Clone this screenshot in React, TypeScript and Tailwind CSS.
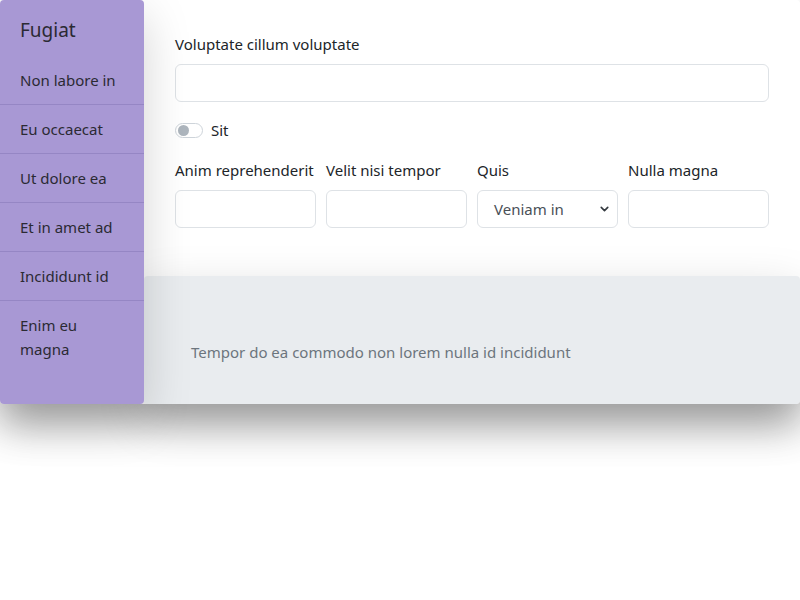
import { ChevronDown } from 'lucide-react';

const navItems = ['Non labore in', 'Eu occaecat', 'Ut dolore ea', 'Et in amet ad', 'Incididunt id', 'Enim eu magna'];

function Field({ label }: { label: string }) {
  return (
    <div className="flex flex-col">
      <label className="mb-2 leading-6">{label}</label>
      <input className="h-[38px] w-full rounded-[6px] border border-[#dee2e6] bg-white px-3 outline-none" />
    </div>
  );
}

export default function App() {
  return (
    <div className="min-h-[600px] w-[800px] bg-white">
      <div
        className="flex w-[800px] rounded bg-white text-[15px] text-[#212529] shadow-[0_20px_40px_rgba(0,0,0,0.3)]"
        style={{ fontFamily: '"Noto Sans", "Open Sans", sans-serif' }}
      >
        {/* Sidebar */}
        <aside className="relative z-10 flex w-[144px] shrink-0 flex-col rounded bg-[#a898d4] text-[#2b2a33] shadow-[0_1rem_3rem_rgba(0,0,0,0.175)]">
          <div className="px-5 pt-[15px] pb-[11px] text-[19px] leading-[30px]">Fugiat</div>
          {navItems.map((item, i) => (
            <div
              key={item}
              className={
                'px-5 py-3 text-[15px] leading-6 ' +
                (i < navItems.length - 1 ? 'border-b border-[#9586c4]' : '')
              }
            >
              {item}
            </div>
          ))}
        </aside>

        {/* Main */}
        <div className="flex min-w-0 flex-1 flex-col">
          <div className="px-[31px] pt-8 pb-12">
            <Field label="Voluptate cillum voluptate" />

            <div className="mt-4 flex items-center gap-2">
              <div className="flex h-[15px] w-[28px] items-center rounded-full border border-[#ced4da] bg-white px-[2px]">
                <div className="h-[11px] w-[11px] rounded-full bg-[#adb5bd]" />
              </div>
              <span className="leading-6">Sit</span>
            </div>

            <div className="mt-4 grid grid-cols-4 gap-[10px]">
              <Field label="Anim reprehenderit" />
              <Field label="Velit nisi tempor" />
              <div className="flex flex-col">
                <label className="mb-2 leading-6">Quis</label>
                <div className="relative h-[38px] rounded-[6px] border border-[#dee2e6] bg-white">
                  <span className="absolute top-1/2 left-4 -translate-y-1/2 text-[#495057]">Veniam in</span>
                  <ChevronDown className="absolute top-1/2 right-[6px] -translate-y-1/2 text-[#343a40]" size={13} strokeWidth={3} />
                </div>
              </div>
              <Field label="Nulla magna" />
            </div>
          </div>

          <div className="h-[128px] rounded bg-[#e9ecef] pt-16 pl-[47px] text-[#6c757d] shadow-[0_1rem_3rem_rgba(0,0,0,0.175)]">
            <p className="leading-6">Tempor do ea commodo non lorem nulla id incididunt</p>
          </div>
        </div>
      </div>
    </div>
  );
}
